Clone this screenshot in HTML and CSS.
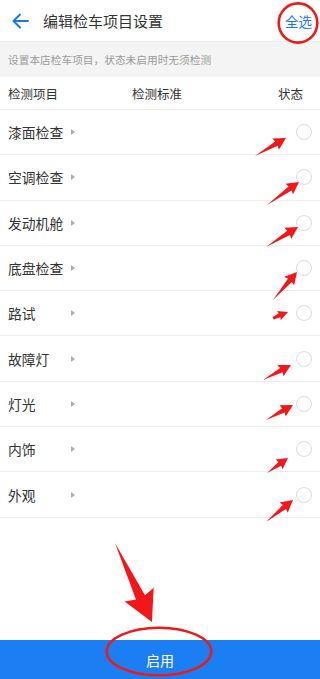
FILE: index.html
```html
<!DOCTYPE html>
<html lang="zh">
<head>
<meta charset="utf-8">
<link rel="stylesheet" href="styles.css">
</head>
<body>
<div class="page">
  <header class="topbar">
    <svg class="back" width="18" height="16" viewBox="0 0 18 16"><path d="M16 8H2M8 1.5L1.5 8 8 14.5" fill="none" stroke="#1a78ee" stroke-width="2" stroke-linecap="round" stroke-linejoin="round"/></svg>
    <h1 class="title">编辑检车项目设置</h1>
    <span class="all">全选</span>
  </header>
  <div class="tip">设置本店检车项目，状态未启用时无须检测</div>
  <div class="thead">
    <span>检测项目</span>
    <span>检测标准</span>
    <span>状态</span>
  </div>
  <ul class="list">
    <li class="row"><span class="name">漆面检查</span><i class="chev"></i><span class="radio"></span></li>
    <li class="row"><span class="name">空调检查</span><i class="chev"></i><span class="radio"></span></li>
    <li class="row"><span class="name">发动机舱</span><i class="chev"></i><span class="radio"></span></li>
    <li class="row"><span class="name">底盘检查</span><i class="chev"></i><span class="radio"></span></li>
    <li class="row"><span class="name">路试</span><i class="chev"></i><span class="radio"></span></li>
    <li class="row"><span class="name">故障灯</span><i class="chev"></i><span class="radio"></span></li>
    <li class="row"><span class="name">灯光</span><i class="chev"></i><span class="radio"></span></li>
    <li class="row"><span class="name">内饰</span><i class="chev"></i><span class="radio"></span></li>
    <li class="row"><span class="name">外观</span><i class="chev"></i><span class="radio"></span></li>
  </ul>
  <div class="spacer"></div>
  <div class="btn">启用</div>

  <svg class="marks" width="320" height="679" viewBox="0 0 320 679">
    <g fill="#f5161a">
      <polygon transform="translate(255,156) rotate(-30.1)" points="0,0 24.8,-2.5 23.8,-6.5 35.8,0 23.8,6.5 24.8,2.5"/>
      <polygon transform="translate(267,205) rotate(-35.7)" points="0,0 28.4,-2.5 27.4,-6.5 39.4,0 27.4,6.5 28.4,2.5"/>
      <polygon transform="translate(266,247) rotate(-32)" points="0,0 26.7,-2.5 25.7,-6.5 37.7,0 25.7,6.5 26.7,2.5"/>
      <polygon transform="translate(273,300) rotate(-49.4)" points="0,0 25.9,-2.5 24.9,-6.5 36.9,0 24.9,6.5 25.9,2.5"/>
      <polygon transform="translate(273,318) rotate(-21.8)" points="0,-1 7.2,-2.2 6.2,-5 16.2,0 6.2,5 7.2,2.2 0,1.5"/>
      <polygon transform="translate(263,380) rotate(-28.2)" points="0,0 20.8,-2.5 19.8,-6.5 31.8,0 19.8,6.5 20.8,2.5"/>
      <polygon transform="translate(266,420) rotate(-29)" points="0,0 19.9,-2.5 18.9,-6.5 30.9,0 18.9,6.5 19.9,2.5"/>
      <polygon transform="translate(267,473) rotate(-35.5)" points="0,0 15.8,-2.3 14.8,-6 25.8,0 14.8,6 15.8,2.3"/>
      <polygon transform="translate(266,522) rotate(-39.2)" points="0,0 23.8,-2.5 22.8,-6.5 34.8,0 22.8,6.5 23.8,2.5"/>
      <polygon transform="translate(115,543) rotate(64.9)" points="0,0 60,-5 57,-16 87.2,0 57,16 60,5"/>
    </g>
    <g fill="none" stroke="#ee1a1a" stroke-width="2.6">
      <ellipse cx="298" cy="23" rx="19.3" ry="19.6"/>
      <ellipse cx="159" cy="651.5" rx="52.3" ry="23.8"/>
    </g>
  </svg>
</div>
</body>
</html>
```

FILE: styles.css
```css
* { box-sizing: border-box; }
html, body { margin: 0; padding: 0; }
body {
  width: 320px;
  height: 679px;
  overflow: hidden;
  background: #fff;
  font-family: "Noto Sans CJK SC", "Noto Sans", sans-serif;
  color: #333;
}
.page {
  position: relative;
  width: 320px;
  height: 679px;
  display: flex;
  flex-direction: column;
}
.topbar {
  height: 42px;
  display: flex;
  align-items: center;
  padding: 0 8px 0 12px;
  background: #fff;
  border-bottom: 1px solid #ededed;
}
.back { flex: none; }
.title {
  margin: 0 0 0 13px;
  font-size: 15px;
  font-weight: normal;
  color: #333;
  flex: 1;
}
.all {
  font-size: 13.5px;
  color: #1a78ee;
}
.tip {
  height: 35px;
  background: #f4f4f4;
  display: flex;
  align-items: center;
  padding-left: 8px;
  font-size: 10.7px;
  color: #9a9a9a;
}
.thead {
  height: 33px;
  display: grid;
  grid-template-columns: 124px 1fr auto;
  align-items: center;
  padding: 0 17px 0 8px;
  font-size: 12.5px;
  color: #333;
  border-bottom: 1px solid #eeeeee;
}
.list {
  list-style: none;
  margin: 0;
  padding: 0;
}
.row {
  height: 45.3px;
  display: flex;
  align-items: center;
  padding: 0 8px;
  border-bottom: 1px solid #eeeeee;
}
.name {
  width: 63px;
  font-size: 13.8px;
  color: #333;
}
.chev {
  width: 0;
  height: 0;
  border-top: 3.5px solid transparent;
  border-bottom: 3.5px solid transparent;
  border-left: 4px solid #a9adb8;
}
.radio {
  margin-left: auto;
  width: 16px;
  height: 16px;
  border-radius: 50%;
  border: 1.3px solid #dcdcdc;
}
.spacer { flex: 1; }
.btn {
  height: 39px;
  background: #1b7ef2;
  color: #fff;
  font-size: 14px;
  display: flex;
  align-items: center;
  justify-content: center;
}
.marks {
  position: absolute;
  left: 0;
  top: 0;
  pointer-events: none;
}
```
